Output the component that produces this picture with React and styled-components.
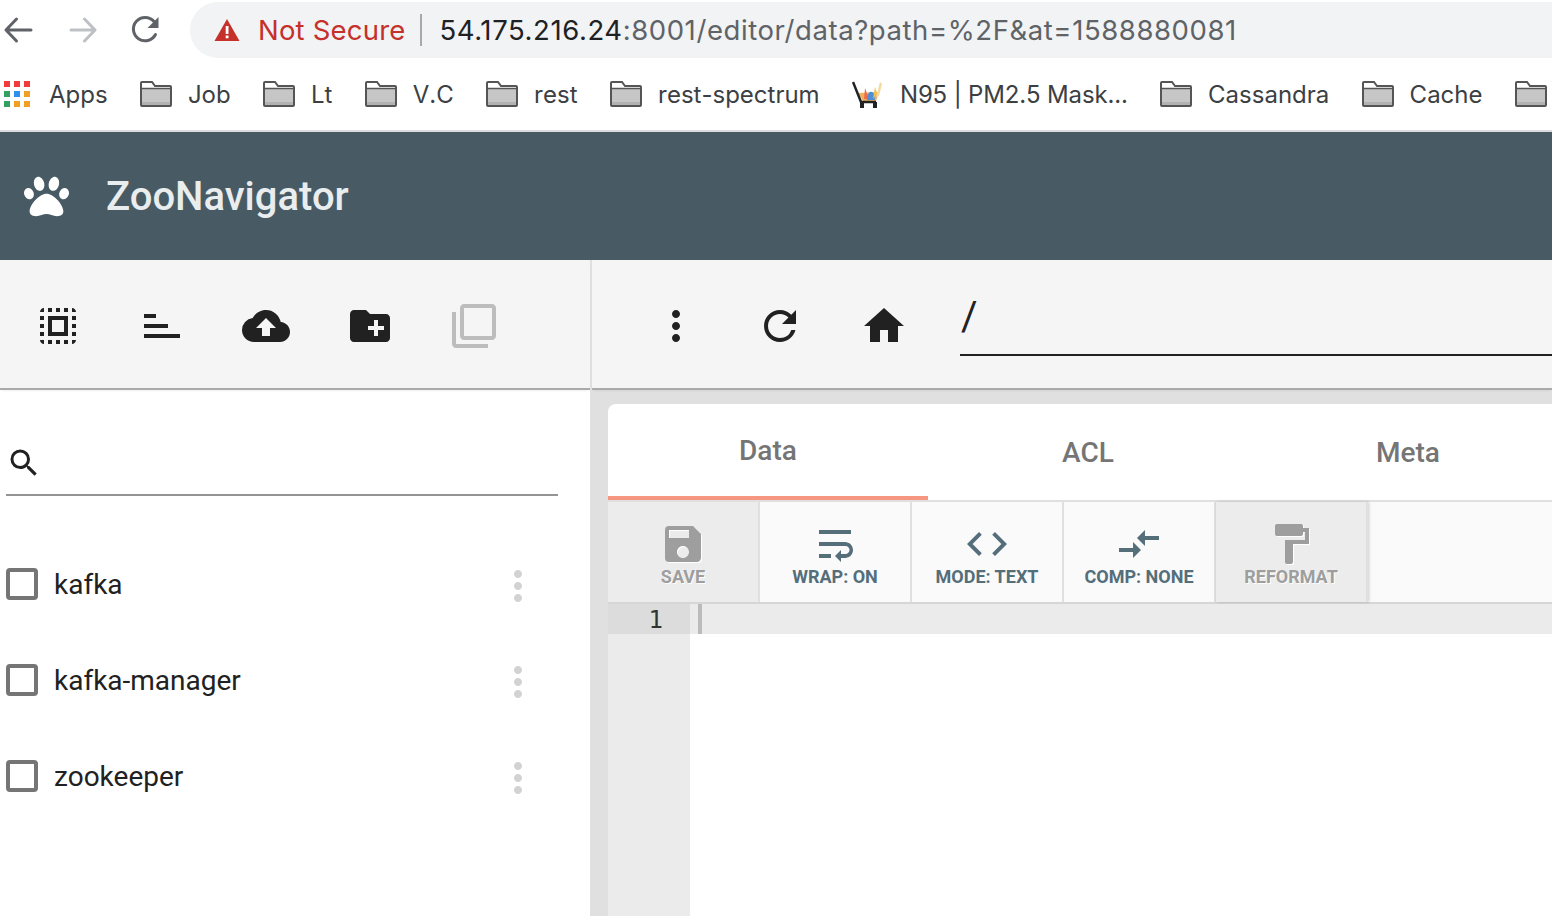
import React from "react";
import styled, { createGlobalStyle } from "styled-components";
import {
  MdSelectAll,
  MdSort,
  MdCloudUpload,
  MdCreateNewFolder,
  MdFilterNone,
  MdMoreVert,
  MdRefresh,
  MdHome,
  MdSearch,
  MdSave,
  MdWrapText,
  MdCode,
  MdCompareArrows,
  MdFormatPaint,
} from "react-icons/md";
import { FaPaw } from "react-icons/fa";

const GlobalStyle = createGlobalStyle`
  html, body {
    margin: 0;
    padding: 0;
    height: 916px;
    overflow: hidden;
    background: #fff;
  }
  * { box-sizing: border-box; }
`;

const Page = styled.div`
  width: 1552px;
  height: 916px;
  overflow: hidden;
  display: flex;
  flex-direction: column;
  font-family: Roboto, "Liberation Sans", sans-serif;
`;

/* browser chrome */
const BrowserBar = styled.div`
  height: 132px;
  flex: none;
  border-bottom: 2px solid #dadce0;
  font-family: Inter, "Liberation Sans", sans-serif;
`;
const NavRow = styled.div`
  height: 60px;
  display: flex;
  align-items: center;
  padding: 2px 0 2px 2px;
`;
const NavButton = styled.div`
  width: 32px;
  height: 32px;
  margin-right: 32px;
  display: flex;
  align-items: center;
  justify-content: center;
`;
const AddressPill = styled.div`
  flex: 1;
  height: 56px;
  margin-left: -4px;
  background: #f1f3f4;
  border-radius: 28px 0 0 28px;
  display: flex;
  align-items: center;
  padding-left: 24px;
  font-size: 27.5px;
  white-space: nowrap;
`;
const NotSecure = styled.span`
  color: #c5302b;
  margin-left: 18px;
  letter-spacing: 0.2px;
`;
const PillDivider = styled.span`
  width: 2px;
  height: 32px;
  background: #a8a9ab;
  margin: 0 18px 0 14px;
`;
const Host = styled.span`
  color: #202124;
  letter-spacing: 0.58px;
`;
const UrlRest = styled.span`
  color: #5f6368;
  letter-spacing: 0.58px;
`;
const BookmarkRow = styled.div`
  height: 70px;
  display: flex;
  align-items: center;
  gap: 32.3px;
  padding: 0 0 2px 4px;
  white-space: nowrap;
`;
const Bookmark = styled.div`
  display: flex;
  align-items: center;
  gap: ${(p) => p.$gap || 16}px;
  font-size: 24px;
  font-kerning: none;
  letter-spacing: ${(p) => (p.$tight ? -0.15 : 0)}px;
  color: #3c4043;
`;

/* app header */
const AppHeader = styled.header`
  height: 128px;
  flex: none;
  background: #485b65;
  display: flex;
  align-items: center;
  padding-left: 24px;
  gap: 37px;
  color: #fff;
`;
const AppTitle = styled.h1`
  margin: 0;
  font-size: 40px;
  font-weight: 500;
  color: #e9edee;
`;

const Workspace = styled.div`
  flex: 1;
  min-height: 0;
  display: flex;
`;
const Sidebar = styled.aside`
  width: 592px;
  flex: none;
  background: #fff;
  border-right: 2px solid #e0e0e0;
`;
const Main = styled.main`
  flex: 1;
  min-width: 0;
  background: #e0e0e0;
  display: flex;
  flex-direction: column;
`;
const ActionBar = styled.div`
  height: 128px;
  background: #f5f5f5;
  display: flex;
  align-items: center;
  padding: 4px 0 0 ${(p) => p.$pad}px;
  gap: 24px;
  box-shadow: 0 2px 0 #aaa, 0 4px 3px -2px rgba(0, 0, 0, 0.12);
  position: relative;
`;
const ActionButton = styled.div`
  width: 80px;
  height: 80px;
  flex: none;
  display: flex;
  align-items: center;
  justify-content: center;
  color: ${(p) => (p.$off ? "#bdbdbd" : "#212121")};
  font-size: 48px;
  svg {
    transform: ${(p) => (p.$flip ? "scaleY(-1)" : "none")};
  }
`;
const PathField = styled.div`
  flex: 1;
  height: 58px;
  margin: 2px 0 0 12px;
  border-bottom: 2px solid #212121;
  font-size: 40px;
  line-height: 38px;
  color: #212121;
  padding-left: 1px;
`;

const SearchRow = styled.div`
  width: 552px;
  height: 70px;
  margin: 38px 0 40px 6px;
  border-bottom: 2px solid #949494;
  display: flex;
  align-items: center;
  padding-top: 6px;
  color: #212121;
`;
const NodeRow = styled.div`
  height: 96px;
  display: flex;
  align-items: center;
  padding-left: 6px;
`;
const Check = styled.span`
  width: 32px;
  height: 32px;
  flex: none;
  border: 4px solid #757575;
  border-radius: 4px;
`;
const NodeName = styled.span`
  flex: 1;
  margin-left: 16px;
  font-size: 28px;
  color: #212121;
`;
const NodeMenu = styled.span`
  width: 48px;
  height: 48px;
  margin: 4px 48px 0 0;
  color: #d2d2d2;
  font-size: 48px;
  display: flex;
`;

const EditorCard = styled.section`
  flex: 1;
  min-height: 0;
  margin: 16px 0 0 16px;
  background: #fff;
  border-radius: 8px 0 0 0;
  overflow: hidden;
  display: flex;
  flex-direction: column;
`;
const TabStrip = styled.div`
  height: 98px;
  flex: none;
  display: flex;
  border-bottom: 2px solid #e0e0e0;
`;
const Tab = styled.div`
  width: 320px;
  height: 96px;
  flex: none;
  display: flex;
  align-items: center;
  justify-content: center;
  font-size: 28px;
  font-weight: 500;
  color: #757575;
  border-bottom: ${(p) => (p.$active ? "4px solid #f69680" : "0")};
`;
const EditorTools = styled.div`
  height: 102px;
  flex: none;
  display: flex;
  border-bottom: 2px solid #d6d6d6;
  background: #fafafa;
`;
const ToolButton = styled.div`
  width: 152px;
  height: 100px;
  flex: none;
  display: flex;
  flex-direction: column;
  align-items: center;
  border-right: 2px solid #e0e0e0;
  background: ${(p) => (p.$off ? "#ececec" : "#fafafa")};
  color: ${(p) => (p.$off ? "#9e9e9e" : "#546e7a")};
  font-size: 18px;
  font-weight: 700;
  padding-top: 18px;
  text-shadow: ${(p) => (p.$off ? "1px 1px 0 #fff" : "none")};
  box-shadow: ${(p) => (p.$raised ? "1px 0 3px rgba(0,0,0,0.18)" : "none")};
  svg {
    flex: none;
    filter: ${(p) => (p.$off ? "drop-shadow(1px 1px 0 #fff)" : "none")};
  }
`;
const ToolLabel = styled.span`
  margin-top: -2px;
  line-height: 22px;
  white-space: nowrap;
`;
const EditorBody = styled.div`
  flex: 1;
  display: flex;
  background: #fff;
`;
const Gutter = styled.div`
  width: 82px;
  background: #ebebeb;
`;
const GutterLine = styled.div`
  height: 30px;
  background: #dcdcdc;
  font-family: "DejaVu Sans Mono", "Liberation Mono", monospace;
  font-size: 24px;
  line-height: 32px;
  color: #333;
  text-align: right;
  padding-right: 27px;
`;
const ActiveLine = styled.div`
  flex: 1;
  height: 30px;
  background: #ebebeb;
  padding-left: 8px;
`;
const Caret = styled.div`
  width: 4px;
  height: 30px;
  background: #bbb;
`;

const BackArrow = ({ color }) => (
  <svg width="30" height="28" viewBox="0 0 30 28" fill="none" stroke={color} strokeWidth="3" strokeLinecap="round" strokeLinejoin="round">
    <path d="M28 14H3M13.5 3 3 14l10.500 11" />
  </svg>
);
const ForwardArrow = ({ color }) => (
  <svg width="30" height="28" viewBox="0 0 30 28" fill="none" stroke={color} strokeWidth="3" strokeLinecap="round" strokeLinejoin="round">
    <path d="M4 14h24M17.500 3 28 14 17.500 25" />
  </svg>
);
const ReloadIcon = () => (
  <svg width="30" height="30" viewBox="0 0 30 30" fill="none">
    <path d="M24.500 19.500A11.700 11.700 0 1 1 23 6.500" stroke="#5f6368" strokeWidth="3" strokeLinecap="round" />
    <path d="M27.500 2v11h-11z" fill="#5f6368" />
  </svg>
);
const WarnIcon = () => (
  <svg width="26" height="24" viewBox="0 0 26 24">
    <path d="M13 1 25.500 23H.5z" fill="#c5302b" />
    <rect x="11.700" y="8" width="2.800" height="8" fill="#fff" />
    <rect x="11.700" y="17.500" width="2.800" height="2.800" fill="#fff" />
  </svg>
);
const AppsGrid = () => {
  const colors = ["#f33b3b", "#f33b3b", "#f33b3b", "#34a05f", "#2f8ff0", "#f2a024", "#34a05f", "#f2a024", "#f2a024"];
  return (
    <svg width="26" height="26" viewBox="0 0 26 26">
      {colors.map((c, i) => (
        <rect key={i} x={(i % 3) * 10} y={Math.floor(i / 3) * 10} width="6" height="6" fill={c} />
      ))}
    </svg>
  );
};
const FolderIcon = () => (
  <svg width="32" height="26" viewBox="0 0 32 26">
    <path d="M2 1h10l3 4h15a1 1 0 0 1 1 1v18a1 1 0 0 1-1 1H2a1 1 0 0 1-1-1V2a1 1 0 0 1 1-1z" fill="#fff" stroke="#555" strokeWidth="2" />
    <path d="M2 8h28v16H2z" fill="#c6c6c6" />
    <path d="M2 21h28v3H2z" fill="#b2b2b2" />
    <path d="M1 7.500h30" stroke="#555" strokeWidth="1.500" />
  </svg>
);
const CartIcon = () => (
  <svg width="32" height="30" viewBox="0 0 32 30">
    <path d="M6 14 11 22h13l3-9z" fill="#f0b060" />
    <path d="M12 20 13 9l4 11z" fill="#ef6c45" />
    <path d="M15 21c0-9 5-10 7-6l1 6z" fill="#4f8fd8" />
    <path d="M21 20l2-12 2 6z" fill="#f2c24a" />
    <path d="M24 18 28 3l2 2-3 12z" fill="#f4d9a0" />
    <path d="M1 3 9 23h15" fill="none" stroke="#222" strokeWidth="2.500" />
    <rect x="8" y="23" width="4" height="6" fill="#222" />
    <rect x="21" y="23" width="4" height="6" fill="#222" />
  </svg>
);

const bookmarks = ["Job", "Lt", "V.C", "rest", "rest-spectrum"];
const nodes = ["kafka", "kafka-manager", "zookeeper"];

export default function App() {
  return (
    <Page>
      <GlobalStyle />
      <BrowserBar>
        <NavRow>
          <NavButton><BackArrow color="#5f6368" /></NavButton>
          <NavButton><ForwardArrow color="#bdc1c6" /></NavButton>
          <NavButton><ReloadIcon /></NavButton>
          <AddressPill>
            <WarnIcon />
            <NotSecure>Not Secure</NotSecure>
            <PillDivider />
            <Host>54.175.216.24</Host>
            <UrlRest>:8001/editor/data?path=%2F&amp;at=1588880081</UrlRest>
          </AddressPill>
        </NavRow>
        <BookmarkRow>
          <Bookmark $gap={19}><AppsGrid />Apps</Bookmark>
          {bookmarks.map((name) => (
            <Bookmark key={name}><FolderIcon />{name}</Bookmark>
          ))}
          <Bookmark $tight><CartIcon />N95 | PM2.5 Mask...</Bookmark>
          <Bookmark><FolderIcon />Cassandra</Bookmark>
          <Bookmark><FolderIcon />Cache</Bookmark>
          <Bookmark><FolderIcon /></Bookmark>
        </BookmarkRow>
      </BrowserBar>

      <AppHeader>
        <FaPaw size={45} />
        <AppTitle>ZooNavigator</AppTitle>
      </AppHeader>

      <Workspace>
        <Sidebar>
          <ActionBar $pad={18}>
            <ActionButton><MdSelectAll /></ActionButton>
            <ActionButton $flip><MdSort /></ActionButton>
            <ActionButton><MdCloudUpload /></ActionButton>
            <ActionButton><MdCreateNewFolder /></ActionButton>
            <ActionButton $off><MdFilterNone /></ActionButton>
          </ActionBar>
          <SearchRow><MdSearch size={36} /></SearchRow>
          {nodes.map((name) => (
            <NodeRow key={name}>
              <Check />
              <NodeName>{name}</NodeName>
              <NodeMenu><MdMoreVert /></NodeMenu>
            </NodeRow>
          ))}
        </Sidebar>
        <Main>
          <ActionBar $pad={44}>
            <ActionButton><MdMoreVert /></ActionButton>
            <ActionButton><MdRefresh /></ActionButton>
            <ActionButton><MdHome /></ActionButton>
            <PathField>/</PathField>
          </ActionBar>
          <EditorCard>
            <TabStrip>
              <Tab $active>Data</Tab>
              <Tab>ACL</Tab>
              <Tab>Meta</Tab>
            </TabStrip>
            <EditorTools>
              <ToolButton $off><MdSave size={48} /><ToolLabel>SAVE</ToolLabel></ToolButton>
              <ToolButton><MdWrapText size={48} /><ToolLabel>WRAP: ON</ToolLabel></ToolButton>
              <ToolButton><MdCode size={48} /><ToolLabel>MODE: TEXT</ToolLabel></ToolButton>
              <ToolButton><MdCompareArrows size={48} /><ToolLabel>COMP: NONE</ToolLabel></ToolButton>
              <ToolButton $off $raised><MdFormatPaint size={48} /><ToolLabel>REFORMAT</ToolLabel></ToolButton>
            </EditorTools>
            <EditorBody>
              <Gutter><GutterLine>1</GutterLine></Gutter>
              <ActiveLine><Caret /></ActiveLine>
            </EditorBody>
          </EditorCard>
        </Main>
      </Workspace>
    </Page>
  );
}
